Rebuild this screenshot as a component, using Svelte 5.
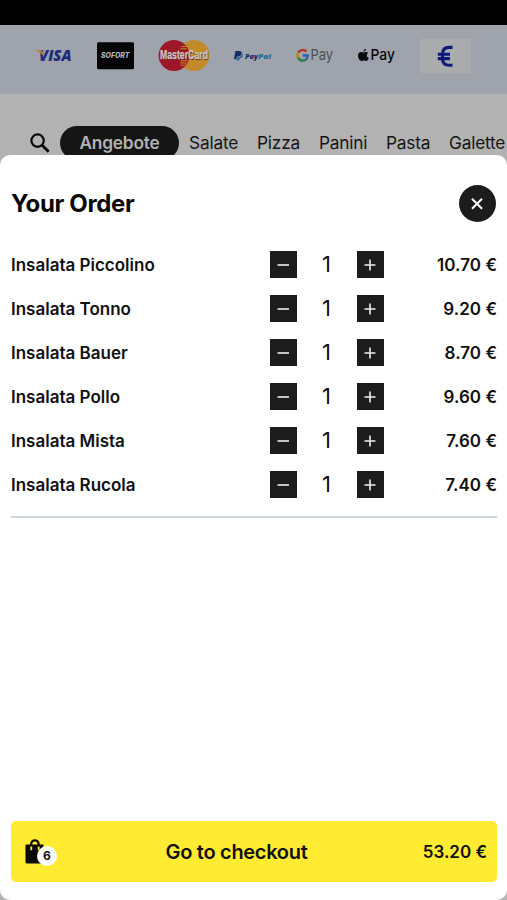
<script>
  const tabs = [
    { name: 'Salate', width: 48 },
    { name: 'Pizza', width: 42 },
    { name: 'Panini', width: 47 },
    { name: 'Pasta', width: 43 },
    { name: 'Galette', width: 58 }
  ];
  let items = $state([
    { name: 'Insalata Piccolino', price: 10.7, qty: 1 },
    { name: 'Insalata Tonno', price: 9.2, qty: 1 },
    { name: 'Insalata Bauer', price: 8.7, qty: 1 },
    { name: 'Insalata Pollo', price: 9.6, qty: 1 },
    { name: 'Insalata Mista', price: 7.6, qty: 1 },
    { name: 'Insalata Rucola', price: 7.4, qty: 1 }
  ]);
  const total = $derived(items.reduce((s, i) => s + i.price * i.qty, 0));
  const count = $derived(items.reduce((s, i) => s + i.qty, 0));
  const money = (v) => v.toFixed(2) + ' €';
</script>

<div class="screen">
  <div class="status"></div>
  <div class="payments">
    <svg width="36" height="36" viewBox="0 0 36 36">
      <text x="3" y="23.4" textLength="32.5" lengthAdjust="spacingAndGlyphs" font-family="Open Sans" font-weight="800" font-style="italic" font-size="15.5" fill="#202a7c">VISA</text>
      <path d="M0 12h4.500q1.800 0 2.200 1.800l1.200 5Q5 14 0 12.400z" fill="#b4802f" />
    </svg>
    <svg width="37" height="36" viewBox="0 0 37 36">
      <rect y="4.200" width="37" height="27" rx="1.500" fill="#050505" />
      <text x="4" y="20.200" textLength="28.500" lengthAdjust="spacingAndGlyphs" font-family="Inter" font-weight="800" font-style="italic" font-size="7" fill="#b5b5b5">SOFORT</text>
    </svg>
    <svg class="mastercard" width="51" height="36" viewBox="0 0 51 36">
      <circle cx="35" cy="17.500" r="15.400" fill="#c38a2a" />
      <circle cx="15" cy="17.500" r="15.400" fill="#9d1728" />
      <path d="M22.500 8.500h5M21.500 10.800h6M21.500 22.800h7M21.500 25h6M21.500 27.200h5" stroke="#c38a2a" stroke-width="1" />
      <text x="1.500" y="21.600" textLength="48" lengthAdjust="spacingAndGlyphs" font-family="Liberation Sans" font-weight="700" font-size="12" fill="#5b2723">MasterCard</text>
      <text x="1" y="21" textLength="48" lengthAdjust="spacingAndGlyphs" font-family="Liberation Sans" font-weight="700" font-size="12" fill="#cbc5c2" stroke="#cbc5c2" stroke-width=".250">MasterCard</text>
    </svg>
    <svg width="37" height="36" viewBox="0 0 37 36">
      <path d="M1.400 13h4.200q2.500.2 2 2.800-.6 2.700-3.400 2.700H3l-.5 2.800H0z" fill="#162e68" />
      <path d="M7.800 15q.6 4-3.500 4.200H3.600L3 22.600h2l.5-2.300q3.300 0 3.300-3.200 0-1.400-1-2.100z" fill="#166594" />
      <text x="11" y="20.800" textLength="13" lengthAdjust="spacingAndGlyphs" font-family="Open Sans" font-weight="800" font-style="italic" font-size="7.500" fill="#1c2d68">Pay</text>
      <text x="24.200" y="20.800" textLength="12.600" lengthAdjust="spacingAndGlyphs" font-family="Open Sans" font-weight="800" font-style="italic" font-size="7.500" fill="#196b9f">Pal</text>
    </svg>
    <svg class="gpay" width="38" height="36" viewBox="0 0 38 36">
      <g fill="none" stroke-width="2.300">
        <path d="M10.400 13.600A5.300 5.300 0 0 0 2 14.700" stroke="#b5332b" />
        <path d="M2.100 14.600A5.300 5.300 0 0 0 2.100 20" stroke="#b88a13" />
        <path d="M2.100 19.900A5.300 5.300 0 0 0 10 21.500" stroke="#267c43" />
        <path d="M9.900 21.500A5.300 5.300 0 0 0 11.800 17.500H6.800" stroke="#315fac" />
      </g>
      <text x="14.500" y="22.200" textLength="22.500" lengthAdjust="spacingAndGlyphs" font-family="Inter" font-size="14.800" fill="#4b4e52">Pay</text>
    </svg>
    <svg class="applepay" width="38" height="36" viewBox="0 0 38 36">
      <path d="M5.500 14.600C6.700 14.600 7 13.900 8.200 14q1.300.1 2 1.100c-2 1.200-1.700 4.200.6 5-.6 1.600-1.500 3-2.600 3-.9 0-1.200-.6-2.300-.6s-1.400.6-2.300.6C1.900 23.100 0 20.200 0 17.600c0-2.300 1.500-3.600 3-3.600 1 0 1.800.6 2.500.6zM5.400 13.700q0-2.300 2.500-3 .2 2.500-2.500 3z" fill="#08090a" />
      <text x="12.600" y="22.300" textLength="24.300" lengthAdjust="spacingAndGlyphs" font-family="Inter" font-weight="500" font-size="15" fill="#08090a">Pay</text>
    </svg>
    <svg class="cash" width="51" height="36" viewBox="0 0 51 36">
      <rect y=".500" width="51" height="35" rx="3" fill="#a9abac" />
      <path d="M32.500 9.400H29.500Q22.500 9.400 22.500 16V20.500Q22.500 27.300 29.500 27.300H32.500M17.800 16.200H30M17.800 20.600H30" fill="none" stroke="#0c197a" stroke-width="3.100" />
    </svg>
  </div>
  <div class="tabs">
    <svg class="search" width="20" height="20" viewBox="0 0 20 20" fill="none" stroke="#090909">
      <circle cx="7.600" cy="7.600" r="6.200" stroke-width="2.200" />
      <path d="M12.200 12.200L18.700 18.700" stroke-width="2.800" />
    </svg>
    <span class="pill">Angebote</span>
    {#each tabs as tab}
      <span class="tab" style="width: {tab.width}px">{tab.name}</span>
    {/each}
  </div>

  <section class="sheet">
    <header>
      <h1>Your Order</h1>
      <button class="close" aria-label="Close">
        <svg width="37" height="37" viewBox="0 0 37 37"><path d="M13 13.800l10 10M23 13.800l-10 10" stroke="#fff" stroke-width="2.100" /></svg>
      </button>
    </header>
    <ul>
      {#each items as item}
        <li>
          <span class="name">{item.name}</span>
          <button class="step" aria-label="Less" onclick={() => item.qty > 0 && item.qty--}>
            <svg width="27" height="27" viewBox="0 0 27 27"><path d="M7.500 14h11.500" stroke="#eee" stroke-width="1.600" /></svg>
          </button>
          <span class="qty">{item.qty}</span>
          <button class="step" aria-label="More" onclick={() => item.qty++}>
            <svg width="27" height="27" viewBox="0 0 27 27"><path d="M7.500 14h11M13 8.500v11" stroke="#eee" stroke-width="1.600" /></svg>
          </button>
          <span class="price">{money(item.price)}</span>
        </li>
      {/each}
    </ul>
    <button class="checkout">
      <span class="bag">
        <svg width="21" height="26" viewBox="0 0 21 26">
          <path d="M1.500 5.500H18.500V24.500H2Q.500 24.500.500 23V6.500Q.500 5.500 1.500 5.500z" fill="#090909" />
          <path d="M6.200 6.500V5a3.700 3.700 0 0 1 7.400 0V6.500" fill="none" stroke="#090909" stroke-width="2.200" />
          <path d="M6.300 7.500v3.700M13.700 7.500v3.700" stroke="#ffeb32" stroke-width="1.800" />
        </svg>
        <span class="badge">{count}</span>
      </span>
      <span class="cta">Go to checkout</span>
      <span class="total">{money(total)}</span>
    </button>
  </section>
</div>

<style>
  :global(body) { margin: 0; background: #b2b2b2; }
  .screen {
    position: relative;
    width: 507px;
    height: 900px;
    overflow: hidden;
    background: #b2b2b2;
    font-family: Inter, "Liberation Sans", sans-serif;
    color: #111;
  }
  button { border: 0; padding: 0; margin: 0; font: inherit; color: inherit; }
  svg { display: block; flex: none; overflow: visible; }
  .status { height: 25px; background: #000; }
  .payments {
    box-sizing: border-box;
    height: 69px;
    padding: 13px 0 0 36px;
    display: flex;
    gap: 24.600px;
    background: #9fa3ac;
  }
  .mastercard { margin: 0 -.500px 0 .500px; }
  .gpay { margin: 0 -.700px 0 .700px; }
  .applepay { margin-right: -1px; }
  .cash { margin-top: -.500px; }
  .tabs { display: flex; padding: 32px 0 0 30px; height: 34px; align-items: center; font-size: 17.300px; white-space: nowrap; }
  .tab { margin: 0 0 1px 20px; flex: none; color: #161616; letter-spacing: -.200px; }
  .pill {
    flex: none;
    width: 119px;
    height: 34px;
    line-height: 34px;
    margin: -1px -10px 0 10px;
    border-radius: 17px;
    background: #151515;
    color: #b2b2b2;
    text-align: center;
    font-weight: 600;
    letter-spacing: -.200px;
  }
  .sheet {
    position: absolute;
    inset: 155px 0 0;
    box-sizing: border-box;
    padding: 30px 10px 18px 11px;
    display: flex;
    flex-direction: column;
    border-radius: 10px;
    background: #fff;
  }
  header { display: flex; align-items: center; justify-content: space-between; height: 37px; padding-right: 1px; }
  h1 { margin: 0; font-size: 24px; font-weight: 700; letter-spacing: -.350px; color: #090909; }
  .close { width: 37px; height: 37px; border-radius: 50%; background: #1c1c1c; }
  ul { list-style: none; margin: 21px 0 0; padding: 0 0 9px; border-bottom: 2px solid #d2d5d5; }
  li { display: flex; align-items: center; height: 44px; font-size: 17px; font-weight: 600; }
  .name { width: 258.500px; }
  .step { width: 27px; height: 27px; margin-bottom: 1px; background: #1c1c1c; }
  .qty { width: 60px; text-align: center; font-size: 22px; font-weight: 400; margin-bottom: 2px; }
  .price { flex: 1; text-align: right; letter-spacing: .050px; }
  .checkout {
    margin-top: auto;
    height: 61px;
    display: flex;
    align-items: center;
    border-radius: 5px;
    background: #ffeb32;
    font-weight: 600;
  }
  .bag { position: relative; width: 65px; padding-left: 14px; box-sizing: border-box; }
  .badge {
    position: absolute;
    left: 26px;
    top: 7px;
    width: 20px;
    height: 20px;
    line-height: 20px;
    border-radius: 50%;
    background: #fff;
    font-size: 12px;
    font-weight: 700;
    text-align: center;
  }
  .cta { flex: 1; font-size: 20px; letter-spacing: -.300px; color: #111; }
  .total { width: 100px; padding-right: 10px; box-sizing: border-box; text-align: right; font-size: 17px; }
</style>
